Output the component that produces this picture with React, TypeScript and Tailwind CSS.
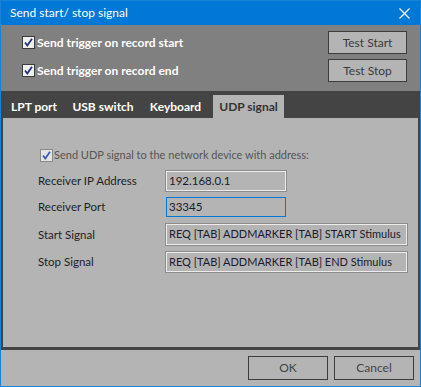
import React from 'react';

const font = { fontFamily: 'Lato, "Noto Sans", Arial, sans-serif' };

const Check: React.FC<{ muted?: boolean }> = ({ muted }) => (
  <svg width="13" height="13" viewBox="0 0 13 13" className="shrink-0">
    <rect x="0.5" y="0.5" width="12" height="12" fill={muted ? '#e4e4e4' : '#f0f0f0'} stroke={muted ? '#8a8a8a' : '#3c3c3c'} />
    <path d="M3 6.5 L5.3 9.5 L10 2.8" fill="none" stroke={muted ? '#3a5bb0' : '#22337a'} strokeWidth="1.8" />
  </svg>
);

const Field: React.FC<{ label: string; value: string; wide?: boolean; focused?: boolean; tall?: boolean }> = ({ label, value, wide, focused, tall }) => (
  <div className="flex items-center">
    <div className="w-[128px] text-[11.5px] text-[#1e1e1e] whitespace-nowrap">{label}</div>
    <div
      className={`${wide ? 'w-[241px] text-[11px]' : 'w-[120px] text-[11.5px]'} ${tall ? 'h-[21px]' : 'h-[20px]'} flex items-center px-[2px] text-[#1a1a2e] whitespace-nowrap overflow-hidden border ${
        focused ? 'border-[#0078d7]' : 'border-[#ececec] shadow-[0_0_0_1px_#8c8c8c]'
      }`}
    >
      {value}
    </div>
  </div>
);

export default function App() {
  return (
    <div className="w-[421px] h-[387px] border border-[#1883d7] flex flex-col bg-[#b4b4b4]" style={font}>
      {/* Title bar */}
      <div className="h-[24px] bg-[#0078d7] flex items-center justify-between pl-[9px] pr-[10px] text-white text-[12px]">
        <span>Send start/ stop signal</span>
        <svg width="11" height="11" viewBox="0 0 11 11">
          <path d="M0.5 0.5 L10.5 10.5 M10.5 0.5 L0.5 10.5" stroke="white" strokeWidth="1.2" />
        </svg>
      </div>

      {/* Trigger options */}
      <div className="h-[66px] bg-[#808080] pt-[6px] pl-[21px] pr-[13px] flex flex-col gap-[5px]">
        {['start', 'end'].map((w) => (
          <div key={w} className="h-[23px] flex items-center justify-between">
            <div className="flex items-center gap-[2px] text-white font-bold text-[12px]">
              <Check />
              <span>Send trigger on record {w}</span>
            </div>
            <button className="w-[79px] h-[23px] bg-[#b4b4b4] border border-[#3c3c3c] text-[#3a3a3a] text-[12px]">
              {w === 'start' ? 'Test Start' : 'Test Stop'}
            </button>
          </div>
        ))}
      </div>

      {/* Tabs */}
      <div className="h-[259px] bg-[#444444] px-[2px] pb-[3px] flex flex-col">
        <div className="h-[27px] pt-[4px] flex text-[12px] font-bold">
          <div className="w-[62px] h-[23px] flex items-center justify-center text-white">LPT port</div>
          <div className="w-[76px] h-[23px] flex items-center justify-center text-white">USB switch</div>
          <div className="w-[69px] h-[23px] flex items-center justify-center text-white">Keyboard</div>
          <div className="ml-[3px] w-[71px] h-[23px] flex items-center justify-center bg-[#b4b4b4] text-[#333333]">UDP signal</div>
        </div>
        <div className="flex-1 bg-[#b4b4b4] pt-[31px] pl-[35px]">
          <div className="h-[13px] flex items-center gap-[1px] ml-[2px] text-[11px] text-[#555555] whitespace-nowrap">
            <Check muted />
            <span>Send UDP signal to the network device with address:</span>
          </div>
          <div className="mt-[9px] flex flex-col gap-[6px]">
            <Field label="Receiver IP Address" value="192.168.0.1" />
            <Field label="Receiver Port" value="33345" focused />
            <div className="mt-[1px]">
              <Field label="Start Signal" value="REQ [TAB] ADDMARKER [TAB] START Stimulus" wide tall />
            </div>
            <div className="mt-[1px]">
              <Field label="Stop Signal" value="REQ [TAB] ADDMARKER [TAB] END Stimulus" wide />
            </div>
          </div>
        </div>
      </div>

      {/* Footer buttons */}
      <div className="flex-1 flex justify-end items-start gap-[6px] pt-[6px] pr-[6px]">
        <button className="w-[80px] h-[24px] border border-[#3c3c3c] text-[#444444] text-[12px]">OK</button>
        <button className="w-[80px] h-[24px] border border-[#3c3c3c] text-[#444444] text-[12px]">Cancel</button>
      </div>
    </div>
  );
}
